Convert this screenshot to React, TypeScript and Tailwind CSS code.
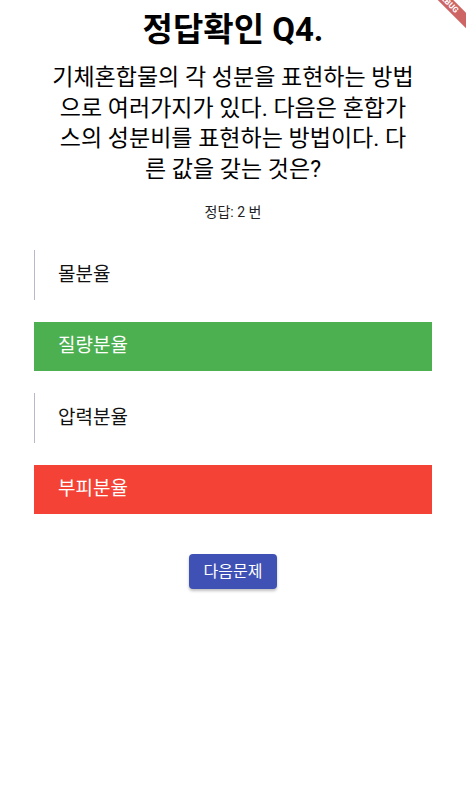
import React from "react";

const options = [
  { label: "몰분율", state: "none" },
  { label: "질량분율", state: "correct" },
  { label: "압력분율", state: "none" },
  { label: "부피분율", state: "wrong" },
];

const questionLines = [
  "기체혼합물의 각 성분을 표현하는 방법",
  "으로 여러가지가 있다. 다음은 혼합가",
  "스의 성분비를 표현하는 방법이다. 다",
  "른 값을 갖는 것은?",
];

export default function App() {
  return (
    <div
      className="relative w-[466px] h-[800px] overflow-hidden bg-white text-black"
      style={{ fontFamily: 'Roboto, "Noto Sans CJK KR", sans-serif' }}
    >
      {/* debug banner, clipped at the corner */}
      <div className="absolute left-[398px] top-[-3px] w-[100px] h-[11px] rotate-45 bg-[#b71c1c]/[0.68] text-white text-[8px] font-bold leading-[11px] text-center pointer-events-none">
        DEBUG
      </div>

      <div className="flex flex-col items-center">
        <h1 className="mt-[9px] text-[33px] font-bold leading-[42px]">정답확인 Q4.</h1>

        <p className="mt-[12px] text-center text-[23px] leading-[30.5px]">
          {questionLines.map((l) => (
            <span key={l} className="block whitespace-nowrap">
              {l}
            </span>
          ))}
        </p>

        <div className="mt-[17px] text-[14px] leading-[20px] text-[#222]">정답: 2 번</div>

        {/* options */}
        <div className="mt-[28px] w-full px-[34px] flex flex-col gap-[22px]">
          {options.map((o) => (
            <div
              key={o.label}
              className={
                o.state === "correct"
                  ? "h-[49px] flex items-center pl-[24px] bg-[#4caf50] text-white text-[19px]"
                  : o.state === "wrong"
                  ? "h-[49px] flex items-center pl-[24px] bg-[#f44336] text-white text-[19px]"
                  : "h-[50px] flex items-center pl-[23px] border-l border-[#b8b8c8] text-[#111] text-[19px]"
              }
            >
              {o.label}
            </div>
          ))}
        </div>

        <button className="mt-[40px] w-[88px] h-[35px] rounded-[4px] bg-[#3f51b5] text-white text-[16px] shadow-[0_2px_3px_rgba(0,0,0,0.25)]">
          다음문제
        </button>
      </div>
    </div>
  );
}
